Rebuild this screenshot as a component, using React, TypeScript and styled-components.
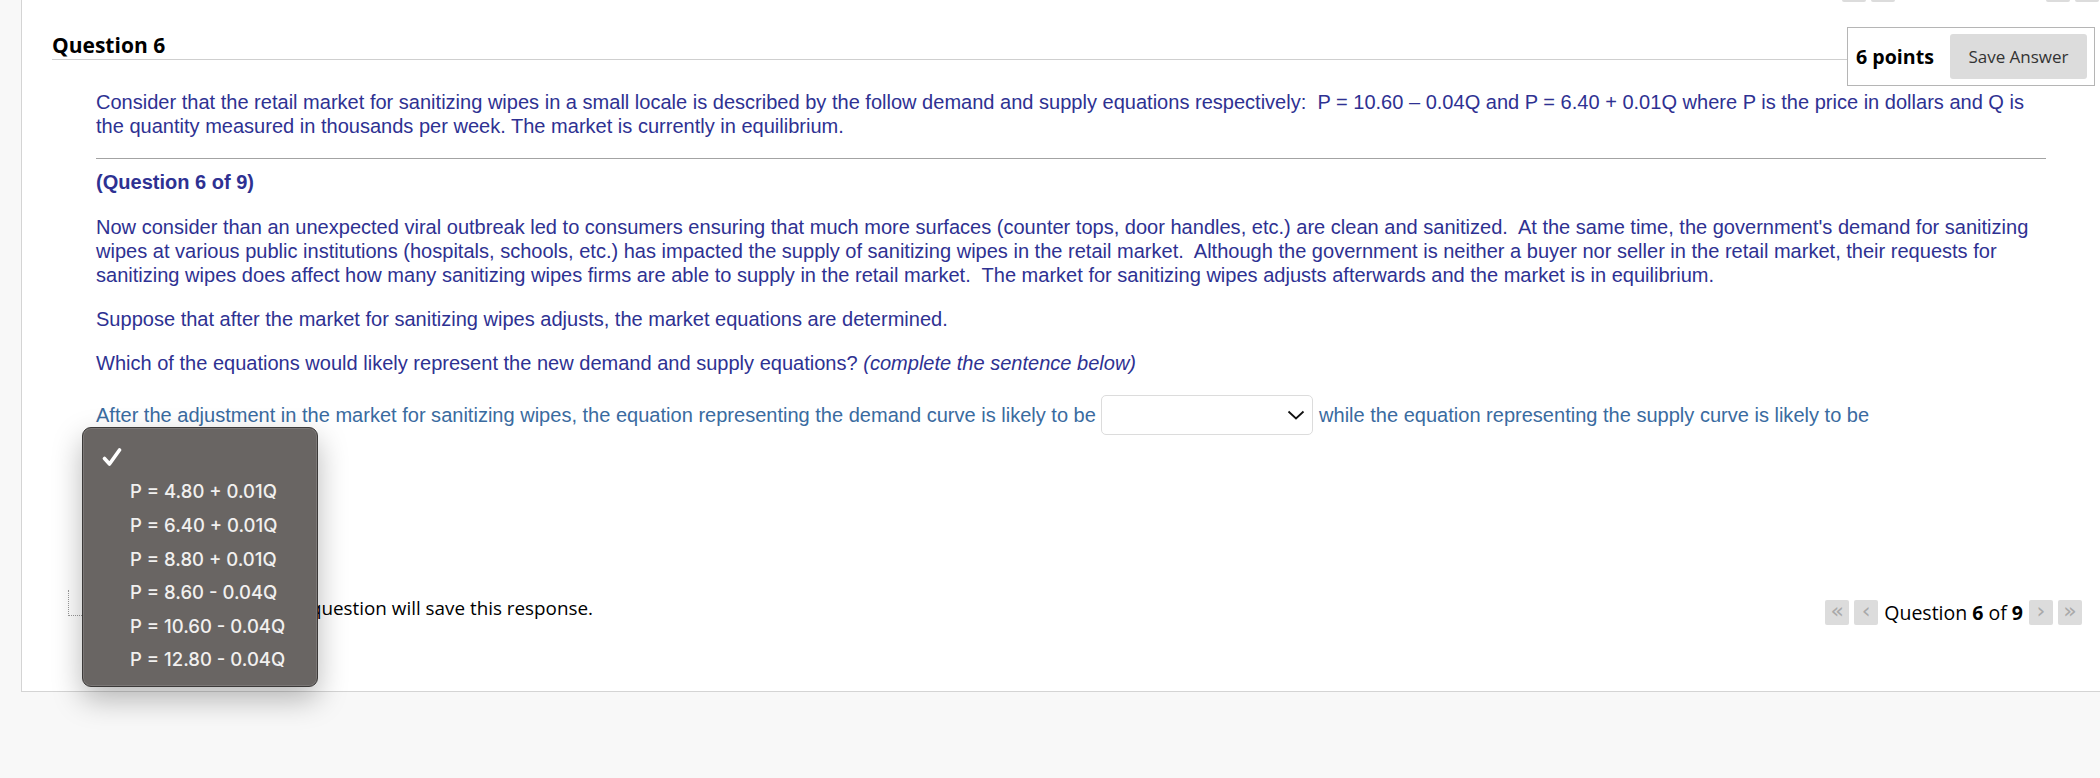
import React from "react"
import styled, { createGlobalStyle } from "styled-components"

const GlobalStyle = createGlobalStyle`
	* {
		box-sizing: border-box;
	}

	body {
		margin: 0;
		background: #f8f8f8;
		font-family: "Open Sans", "Liberation Sans", sans-serif;
	}
`

const options = [
	"P = 4.80 + 0.01Q",
	"P = 6.40 + 0.01Q",
	"P = 8.80 + 0.01Q",
	"P = 8.60 - 0.04Q",
	"P = 10.60 - 0.04Q",
	"P = 12.80 - 0.04Q",
]

const QuestionNav: React.FC<{ top?: boolean }> = ({ top }) => (
	<NavRow $top={top}>
		<NavButton aria-label="First question">«</NavButton>
		<NavButton aria-label="Previous question">‹</NavButton>
		<NavLabel>
			Question <b>6</b> of <b>9</b>
		</NavLabel>
		<NavButton aria-label="Next question">›</NavButton>
		<NavButton aria-label="Last question">»</NavButton>
	</NavRow>
)

const App: React.FC = () => {
	return (
		<>
			<GlobalStyle />
			<Page>
				<Panel>
					<QuestionNav top />

					<HeaderRow>
						<Title>Question 6</Title>
						<PointsBox>
							<Points>6 points</Points>
							<SaveButton>Save Answer</SaveButton>
						</PointsBox>
					</HeaderRow>

					<Content>
						<Paragraph>
							Consider that the retail market for sanitizing wipes in a small
							locale is described by the follow demand and supply equations
							respectively:&nbsp; P = 10.60 – 0.04Q and P = 6.40 + 0.01Q where P
							is the price in dollars and Q is the quantity measured in thousands
							per week. The market is currently in equilibrium.
						</Paragraph>

						<Rule />

						<SubTitle>(Question 6 of 9)</SubTitle>

						<Paragraph>
							Now consider than an unexpected viral outbreak led to consumers
							ensuring that much more surfaces (counter tops, door handles, etc.)
							are clean and sanitized.&nbsp; At the same time, the government's
							demand for sanitizing wipes at various public institutions
							(hospitals, schools, etc.) has impacted the supply of sanitizing
							wipes in the retail market.&nbsp; Although the government is
							neither a buyer nor seller in the retail market, their requests for
							sanitizing wipes does affect how many sanitizing wipes firms are
							able to supply in the retail market.&nbsp; The market for
							sanitizing wipes adjusts afterwards and the market is in
							equilibrium.
						</Paragraph>

						<Paragraph>
							Suppose that after the market for sanitizing wipes adjusts, the
							market equations are determined.
						</Paragraph>

						<Paragraph>
							Which of the equations would likely represent the new demand and
							supply equations? <em>(complete the sentence below)</em>
						</Paragraph>

						<AnswerLine>
							After the adjustment in the market for sanitizing wipes, the
							equation representing the demand curve is likely to be{" "}
							<SelectBox>
								<svg width="18" height="10" viewBox="0 0 18 10">
									<path
										d="M1.5 1.5 L9 8.5 L16.5 1.5"
										fill="none"
										stroke="#111"
										strokeWidth="1.8"
									/>
								</svg>
							</SelectBox>{" "}
							while the equation representing the supply curve is likely to be
						</AnswerLine>
					</Content>

					<Footer>
						<SaveNote>
							<FocusMark />
							Moving to another question will save this response.
						</SaveNote>
						<QuestionNav />
					</Footer>
				</Panel>

				<Menu>
					<MenuItem>
						<svg width="20" height="19" viewBox="0 0 20 19">
							<path
								d="M2.5 10.5 L7.5 16 L17.5 2"
								fill="none"
								stroke="#fff"
								strokeWidth="3.6"
								strokeLinecap="round"
								strokeLinejoin="round"
							/>
						</svg>
					</MenuItem>
					{options.map((option) => (
						<MenuItem key={option} $indent>
							{option}
						</MenuItem>
					))}
				</Menu>
			</Page>
		</>
	)
}

export default App

const Page = styled.div`
	position: relative;
	min-height: 778px;
	padding-left: 21px;
	overflow: hidden;
`

const Panel = styled.div`
	background: #fff;
	border-left: 1px solid #d4d4d4;
	border-bottom: 1px solid #d4d4d4;
	padding-bottom: 65px;
`

const NavRow = styled.div<{ $top?: boolean }>`
	display: flex;
	align-items: center;
	justify-content: flex-end;
	gap: 5px;
	height: 25px;
	margin-top: ${({ $top }) => ($top ? "-23px" : "0")};
	margin-right: ${({ $top }) => ($top ? "1px" : "0")};
`

const NavButton = styled.span`
	display: flex;
	align-items: center;
	justify-content: center;
	width: 24px;
	height: 25px;
	border-radius: 2px;
	background: #dcdcdc;
	color: #a9a9a9;
	font-family: "DejaVu Sans", sans-serif;
	font-size: 22px;
	line-height: 1;
	padding-bottom: 3px;
`

const NavLabel = styled.span`
	font-family: "Open Sans", sans-serif;
	font-size: 19.5px;
	color: #000;
	margin: 0 1px;

	b {
		font-weight: 700;
	}
`

const HeaderRow = styled.div`
	display: flex;
	align-items: flex-start;
	margin-top: 25px;
	padding-left: 30px;
	padding-right: 5px;
`

const Title = styled.h3`
	flex: 1;
	display: flex;
	align-items: flex-end;
	height: 33px;
	margin: 0;
	padding-bottom: 1px;
	border-bottom: 1px solid #cfcfcf;
	font-family: "Open Sans", sans-serif;
	font-weight: 700;
	font-size: 21px;
	line-height: 25px;
	color: #000;
`

const PointsBox = styled.div`
	display: flex;
	align-items: center;
	gap: 16px;
	width: 248px;
	height: 59px;
	padding: 0 7px 0 8px;
	border: 1px solid #b5b5b5;
	background: #fff;
`

const Points = styled.span`
	font-family: "Open Sans", sans-serif;
	font-weight: 700;
	font-size: 19.6px;
	color: #000;
	white-space: nowrap;
`

const SaveButton = styled.button`
	width: 141px;
	height: 45px;
	border: none;
	border-radius: 3px;
	background: #dcdcdc;
	font-family: "Open Sans", sans-serif;
	font-size: 17px;
	color: #333;
	padding: 0;
`

const Content = styled.div`
	padding: 4px 54px 0 74px;
	font-family: "Liberation Sans", Arial, sans-serif;
	font-size: 20.05px;
	line-height: 24px;
	color: #2e3192;
`

const Paragraph = styled.p`
	margin: 0 0 20px;

	em {
		font-style: italic;
	}
`

const Rule = styled.hr`
	margin: 0 0 11px;
	border: none;
	border-top: 1px solid #a3a3a3;
	height: 0;
`

const SubTitle = styled.p`
	margin: 0 0 21px;
	font-weight: 700;
`

const AnswerLine = styled.p`
	margin: 0;
	line-height: 40px;
	color: #3a6ba0;
`

const SelectBox = styled.span`
	display: inline-flex;
	align-items: center;
	justify-content: flex-end;
	width: 212px;
	height: 40px;
	vertical-align: top;
	padding-right: 7px;
	border: 1px solid #dcdcdc;
	border-radius: 5px;
	background: #fff;
`

const Footer = styled.div`
	display: flex;
	align-items: center;
	justify-content: space-between;
	margin-top: 163px;
	padding: 0 18px 0 46px;
`

const SaveNote = styled.div`
	display: flex;
	align-items: flex-end;
	gap: 35px;
	height: 20px;
	margin-bottom: 8px;
	font-family: "Open Sans", sans-serif;
	font-size: 18.85px;
	color: #000;
	line-height: 20px;
`

const FocusMark = styled.span`
	width: 40px;
	height: 26px;
	margin-bottom: 2px;
	border-left: 1px dotted #9a9a9a;
	border-bottom: 1px dotted #9a9a9a;
`

const Menu = styled.div`
	position: absolute;
	left: 82px;
	top: 427px;
	width: 236px;
	height: 260px;
	padding: 13px 0 12px;
	border: 1px solid #3c3a39;
	border-radius: 9px;
	background: #696563;
	box-shadow: inset 0 0 0 1px rgba(255, 255, 255, 0.12),
		0 12px 30px rgba(0, 0, 0, 0.28);
`

const MenuItem = styled.div<{ $indent?: boolean }>`
	display: flex;
	align-items: center;
	height: 33.6px;
	padding-left: ${({ $indent }) => ($indent ? "47px" : "19px")};
	font-family: Inter, "Noto Sans", sans-serif;
	font-size: 18.5px;
	font-weight: 500;
	color: #f1f0ef;
	white-space: nowrap;
`
